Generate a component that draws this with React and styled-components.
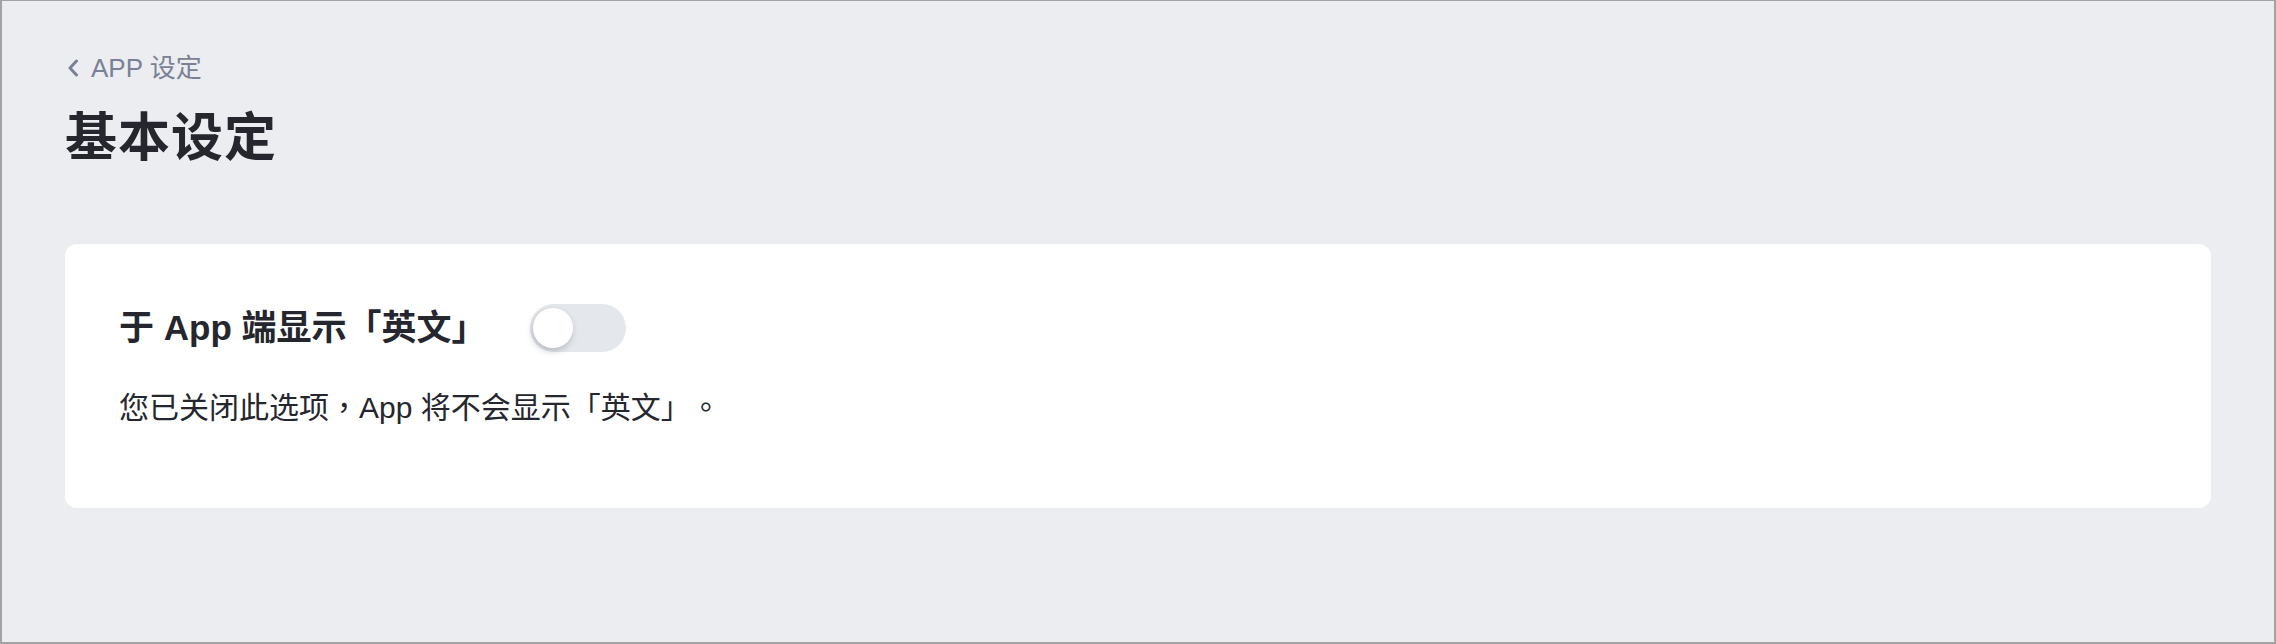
import React, { useState } from "react";
import styled, { createGlobalStyle } from "styled-components";

const GlobalStyle = createGlobalStyle`
    html, body {
        margin: 0;
        padding: 0;
        background: #ecedf0;
    }
    * {
        box-sizing: border-box;
    }
`;

const Frame = styled.div`
    width: 2276px;
    height: 644px;
    background: #ecedf0;
    border: 2px solid #a2a2a2;
    border-top-width: 1px;
    padding: 49px 63px 0 63px;
    font-family: "Liberation Sans", "Noto Sans CJK TC", sans-serif;
    text-spacing-trim: space-all;
`;

const BackLink = styled.a`
    display: flex;
    align-items: center;
    gap: 12px;
    color: #7a8196;
    font-size: 26px;
    line-height: 36px;
    text-decoration: none;
    cursor: pointer;
    padding-left: 2px;
`;

const Title = styled.h1`
    margin: 20px 0 0;
    font-size: 52px;
    line-height: 64px;
    font-weight: 700;
    letter-spacing: 1px;
    color: #25262e;
`;

const Card = styled.section`
    margin-top: 74px;
    background: #fff;
    border-radius: 12px;
    padding: 60px 54px 80px;
`;

const Row = styled.div`
    display: flex;
    align-items: center;
    gap: 44px;
`;

const RowTitle = styled.h2`
    margin: 0;
    font-size: 35px;
    line-height: 48px;
    font-weight: 700;
    color: #25262e;
`;

const Track = styled.button`
    position: relative;
    width: 96px;
    height: 48px;
    border: none;
    border-radius: 24px;
    padding: 0;
    background: ${p => (p.$on ? "#3b82f6" : "#e4e7eb")};
    cursor: pointer;
    transition: .2s ease all;
`;

const Knob = styled.span`
    position: absolute;
    top: 4px;
    left: ${p => (p.$on ? "52px" : "3px")};
    width: 40px;
    height: 40px;
    border-radius: 50%;
    background: #fff;
    box-shadow: -1px 3px 6px rgba(60, 70, 80, 0.28);
    transition: .2s ease all;
`;

const Hint = styled.p`
    margin: 36px 0 0;
    font-size: 30px;
    line-height: 40px;
    color: #25262e;
`;

// full-width punctuation sits in the middle of its cell
const Punct = styled.span`
    display: inline-block;
    width: 1em;
    text-align: center;
`;

const Chevron = () => (
    <svg width="12" height="18" viewBox="0 0 12 18" fill="none">
        <path d="M9.5 2 L3 9 L9.5 16" stroke="#7a8196" strokeWidth="3" strokeLinecap="round" strokeLinejoin="round" />
    </svg>
);

const App = () => {
    const [english, setEnglish] = useState(false);

    return (
        <>
            <GlobalStyle />
            <Frame lang="zh-TW">
                <BackLink><Chevron />APP 设定</BackLink>
                <Title>基本设定</Title>
                <Card>
                    <Row>
                        <RowTitle>于 App 端显示「英文」</RowTitle>
                        <Track $on={english} onClick={() => setEnglish(!english)}>
                            <Knob $on={english} />
                        </Track>
                    </Row>
                    <Hint>
                        {english ? "您已开启此选项" : "您已关闭此选项"}
                        <Punct>，</Punct>
                        {english ? "App 将会显示「英文」" : "App 将不会显示「英文」"}
                        <Punct>。</Punct>
                    </Hint>
                </Card>
            </Frame>
        </>
    );
};

export default App;
